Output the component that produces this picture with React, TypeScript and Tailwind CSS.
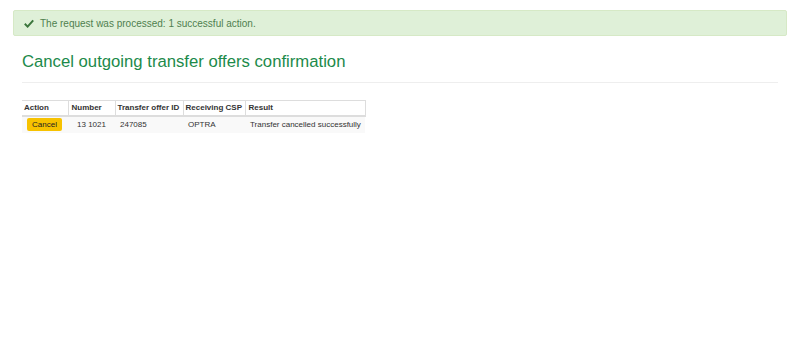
import React from 'react';

const rows = [
  { number: '13 1021', offer: '247085', csp: 'OPTRA', result: 'Transfer cancelled successfully' },
];

function Check() {
  return (
    <svg width="10" height="9" viewBox="0 0 10 9" className="shrink-0">
      <path d="M0.8 4.8 L3.6 7.6 L9.2 1.4" fill="none" stroke="#3c763d" strokeWidth="2" />
    </svg>
  );
}

export default function App() {
  return (
    <div className="w-[800px] h-[354px] bg-white font-['Liberation_Sans',Arial,sans-serif]">
      <div className="pt-[10px] pl-[13px] pr-[13px]">
        <div className="flex items-center gap-[6px] h-[26px] px-[10px] bg-[#dff0d8] border border-[#d6e9c6] rounded-[2px] text-[#4f7f4f] text-[10px]">
          <Check />
          <span>The request was processed: 1 successful action.</span>
        </div>
      </div>
      <div className="px-[22px]">
        <h1 className="mt-[16px] text-[16.7px] leading-[20px] text-[#1c8a4a]">Cancel outgoing transfer offers confirmation</h1>
        <div className="mt-[10px] border-t border-[#eeeeee]" />
        <table className="mt-[17px] border-collapse text-[8px] text-[#333333] whitespace-nowrap">
          <thead>
            <tr className="border-t border-[#dddddd]">
              <th className="w-[46px] h-[15px] px-[2px] text-left font-bold border-b-2 border-r border-[#dddddd]">Action</th>
              <th className="w-[47px] px-[3px] text-left font-bold border-b-2 border-r border-[#dddddd]">Number</th>
              <th className="w-[68px] px-[2px] text-left font-bold border-b-2 border-r border-[#dddddd]">Transfer offer ID</th>
              <th className="w-[62px] px-[2px] text-left font-bold border-b-2 border-r border-[#dddddd]">Receiving CSP</th>
              <th className="w-[120px] px-[3px] text-left font-bold border-b-2 border-r border-[#dddddd]">Result</th>
            </tr>
          </thead>
          <tbody>
            {rows.map((r) => (
              <tr key={r.offer} className="bg-[#f9f9f9]">
                <td className="h-[17px] px-[5px]">
                  <span className="inline-block px-[5px] leading-[13px] rounded-[2px] bg-[#f7c200] text-[#222222]">Cancel</span>
                </td>
                <td className="px-[3px] text-center">{r.number}</td>
                <td className="px-[5px]">{r.offer}</td>
                <td className="px-[5px]">{r.csp}</td>
                <td className="pl-[5px] pr-[3px]">{r.result}</td>
              </tr>
            ))}
          </tbody>
        </table>
      </div>
    </div>
  );
}
